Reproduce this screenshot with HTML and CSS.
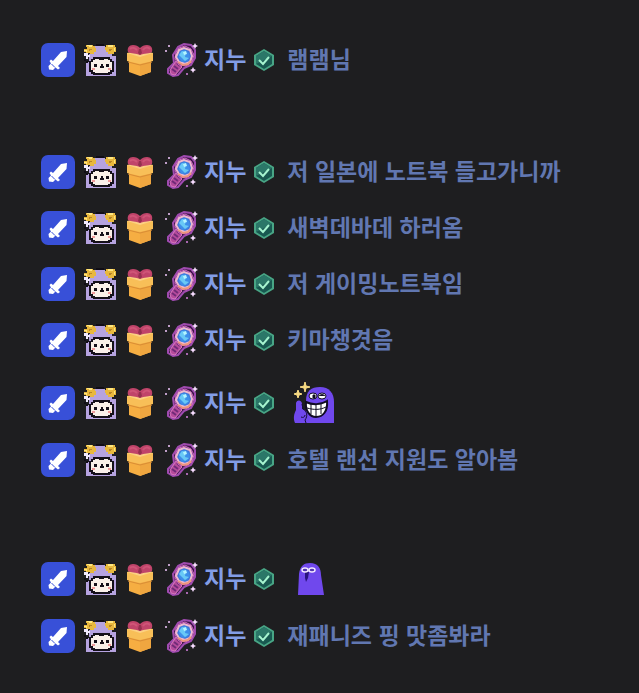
FILE: index.html
```
<!DOCTYPE html>
<html lang="ko">
<head>
<meta charset="utf-8">
<meta name="viewport" content="width=device-width, initial-scale=1">
<title>채팅</title>
<link rel="stylesheet" href="styles.css">
</head>
<body>
<svg class="sprites" aria-hidden="true">
  <symbol id="sword" viewBox="0 0 34 34">
    <rect width="34" height="34" rx="7" fill="#3850d8"/>
    <path d="M26 8 25.500 14 17 23 19 25 17 26.500 14.500 24.500 12 27 8 26.500 7.500 23 10 20.500 8.500 18 10 16.500 12 18 20 9Z" fill="#fff"/>
    <path d="m10.500 21 3.500 3.500" stroke="#3850d8"/>
  </symbol>
  <symbol id="sheep" viewBox="0 0 32 32">
    <path d="M11 2H21V4H24V8H28V12H32V32H2V18H5V10H8V5H11Z" fill="#b6a3e0"/>
    <path d="M0 9H4V11H6V13H4V15H2V12H0Z" fill="#f1eaff"/>
    <path d="M0 15H2V17H4V19H2V17H0ZM12 0H20V2H12Z" fill="#100d16"/>
    <path d="M2 1H9V2H11V4H12V8H10V10H6V9H2V8H0V5H3V3H2ZM22 1H31V3H32V8H30V10H24V8H22V6H21V3H22Z" fill="#e8b83d"/>
    <path d="M3 1H8V3H5V2H3ZM0 6H3V8H2V7H0ZM24 1H29V3H24ZM30 4H31V7H30Z" fill="#ffe780"/>
    <path d="M5 5H8V6H6V7H5ZM25 5H28V6H27V7H25Z" fill="#b78327"/>
    <path d="M9 13H26V15H28V17H30V28H28V30H26V31H9V30H7V28H5V17H7V15H9Z" fill="#15101a"/>
    <path d="M9 16H11V15H15V16H20V15H24V16H26V18H28V26H26V28H24V29H11V28H9V26H7V18H9Z" fill="#faf0e9"/>
    <path d="M10 20H13V23H10ZM22 20H25V23H22ZM17 20H19V22H20V24H16V22H17Z" fill="#15101a"/>
    <path d="M8 24H11V26H8ZM24 24H27V26H24Z" fill="#f09a9a"/>
  </symbol>
  <symbol id="gift" viewBox="0 0 28 32">
    <path d="M3 16 14 19 25 16v12L14 32 3 28Z" fill="#f6ae42"/>
    <path d="M14 19 25 16v12L14 32Z" fill="#efa640"/>
    <path d="m1 9 13-2 13 2v8l-13 3L1 17Z" fill="#f8bf58"/>
    <path d="m1 9 13-2 13 2-13 4Z" fill="#fcd183"/>
    <path d="m2 18 12 3 12-3" fill="none" stroke="#d98d35"/>
    <path d="M2 8C1 4 3 1 7 1c3 0 5 1 7 3 2-2 4-3 7-3 4 0 6 3 5 7-2 2-8 1-12 3C10 9 5 10 2 8Z" fill="#c0446a"/>
    <path d="M4 5c2-2 5-1 7 1M17 6c2-3 5-3 7-1" fill="none" stroke="#cf5578" stroke-width="2"/>
    <path d="m13 5h2l1 4-2 2-2-2Z" fill="#94304f"/>
  </symbol>
  <symbol id="lens" viewBox="0 0 34 34">
    <path d="m14 4 6-3 7 1 4 5v8l-4 7-7 3-6 7-5 1-5-3V26l6-6-1-8Z" fill="#3c1649" stroke="#a04bb0" stroke-width="2"/>
    <path d="m12 18-6 9 1 4 4 1 7-8Z" fill="#b54b9c" stroke="#d979c0"/>
    <path d="m8 26 4 3m-2-6 4 3m-1-6 3 3" stroke="#702b78" stroke-width="2"/>
    <path d="m15 5 6-2 6 3 3 6-2 7-6 4-7-1-4-6 1-7Z" fill="#6a3090" stroke="#d56abd"/>
    <path d="m15 7 5-2 6 2 2 6-2 6-5 2-6-2-3-5Z" fill="#3d78da" stroke="#efb9cf" stroke-width="2"/>
    <path d="m15 11 2-3 4-1 4 3 1 4-3 4-5 1-3-4Z" fill="#3e8ee9"/>
    <path d="m15 12 3-4 4 1-1 5 4 1-4 3-3-3Z" fill="#69c9f6"/>
    <path d="m19 9 3-1 1 3-3 1Z" fill="#b4f5ff"/>
    <path d="m14 19 5 3 5-1 3-3" fill="none" stroke="#ed967d" stroke-width="2"/>
    <path d="m31 0 1 2 2 1-2 1-1 2-1-2-2-1 2-1ZM29 24l1 2 2 1-2 1-1 2-1-2-2-1 2-1Z" fill="#f7dcff"/>
    <circle cx="5" cy="3" r="1" fill="#f4caff"/><circle cx="2" cy="8" r="1" fill="#f4caff"/><circle cx="23" cy="31" r="1" fill="#d781df"/>
  </symbol>
  <symbol id="check" viewBox="0 0 22 24">
    <path d="m11 1 10 6v10l-10 6-10-6V7Z" fill="#48a585"/>
    <path d="m11 3 8 5v8l-8 5-8-5V8Z" fill="#185850"/>
    <path d="m11 3 8 5-16 8V8Z" fill="#2b7768"/>
    <path d="m6 12 4 4 6-7" fill="none" stroke="#a5f4cf" stroke-width="2"/>
  </symbol>
  <symbol id="grin" viewBox="0 0 42 42">
    <path d="M13 41V19C13 9 18 5 27 5s14 6 14 15v21Z" fill="#7048ed"/>
    <path d="M2 41c-2-5-1-9 1-13V21c1-4 6-3 6 1v5c4 1 6 4 5 7l-1 7Z" fill="#7048ed"/>
    <path d="M13 41 12 38c3-4 2-9-2-11l-1-5M8 35c2 1 4 0 4-2" fill="none" stroke="#160d38" stroke-width="1"/>
    <path d="M13 20c6 3 15 3 21-1 1 10-4 16-11 16-6 0-11-6-10-15Z" fill="#fff" stroke="#110c22" stroke-width="2"/>
    <path d="M14 26c7 2 13 2 19-1M18 22v10M23 22v12M28 21v11" fill="none" stroke="#110c22"/>
    <ellipse cx="20" cy="14" rx="4" ry="3" fill="#fff" stroke="#110c22"/><ellipse cx="29" cy="14" rx="4" ry="3" fill="#fff" stroke="#110c22"/>
    <path d="M20 13h2v3h-2ZM26 14c2-2 4-2 6 0" fill="#110c22" stroke="#110c22"/>
    <path d="m12 0 1 4 4 1-4 1-1 4-1-4-4-1 4-1ZM5 8l1 3 3 1-3 1-1 3-1-3-3-1 3-1Z" fill="#f9dc83" stroke="#f9dc83"/>
  </symbol>
  <symbol id="ghost" viewBox="0 0 28 34">
    <path d="M1 33 2 12C3 4 7 1 13 1c8 0 11 5 11 12l3 20Z" fill="#7048ed"/>
    <path d="M8 10h4l-1 6-2 4-1-4Z" fill="#28127e"/>
    <ellipse cx="8" cy="8" rx="3" ry="2" fill="#5134b3" stroke="#f3e9ff" stroke-width="1.500"/><ellipse cx="15" cy="8" rx="3" ry="2" fill="#5134b3" stroke="#f3e9ff" stroke-width="1.500"/>
  </symbol>
</svg>
<main class="chat"></main>
<script src="chat.js"></script>
</body>
</html>
```
FILE: styles.css
```
* { box-sizing: border-box; }
body {
  margin: 0;
  min-height: 100vh;
  background: #1e1e20;
  color: #6177b1;
  font: 700 23px/32px "Noto Sans CJK KR", sans-serif;
}
.sprites { position: absolute; width: 0; height: 0; }
.chat { padding: 32px 40px 28px; }
.message { display: flex; align-items: center; min-height: 56px; }
.message.with-emote { min-height: 64px; padding-top: 6px; }
.message.spaced { margin-top: 56px; }
.badges { display: flex; align-items: center; gap: 8px; flex: none; }
.icon { display: block; flex: none; }
.icon.sword { width: 36px; height: 34px; }
.icon.sheep { width: 32px; height: 32px; }
.icon.gift { width: 32px; height: 32px; }
.icon.lens { width: 34px; height: 34px; }
.name { flex: none; margin-left: 6px; padding-bottom: 5px; color: #829de6; }
.icon.check { width: 22px; height: 24px; margin-left: 7px; }
.text { margin: 0 0 0 12px; padding-bottom: 5px; }
.emote { display: block; margin-left: 18px; }
.emote.grin { width: 42px; height: 42px; }
.emote.ghost { width: 28px; height: 34px; margin-left: 22px; }
```
FILE: chat.js
```
const messages = [
  { text: "램램님" },
  { text: "저 일본에 노트북 들고가니까", spaced: true },
  { text: "새벽데바데 하러옴" },
  { text: "저 게이밍노트북임" },
  { text: "키마챙겻음" },
  { emote: "grin" },
  { text: "호텔 랜선 지원도 알아봄" },
  { emote: "ghost", spaced: true },
  { text: "재패니즈 핑 맛좀봐라" }
];

const icon = (name, kind = "icon") =>
  `<svg class="${kind} ${name}" aria-hidden="true"><use href="#${name}"/></svg>`;

document.querySelector(".chat").innerHTML = messages.map(m => `
  <article class="message${m.emote ? " with-emote" : ""}${m.spaced ? " spaced" : ""}">
    <div class="badges">${["sword", "sheep", "gift", "lens"].map(n => icon(n)).join("")}</div>
    <span class="name">지누</span>
    ${icon("check")}
    ${m.emote ? icon(m.emote, "emote") : `<p class="text">${m.text}</p>`}
  </article>`).join("");
```
